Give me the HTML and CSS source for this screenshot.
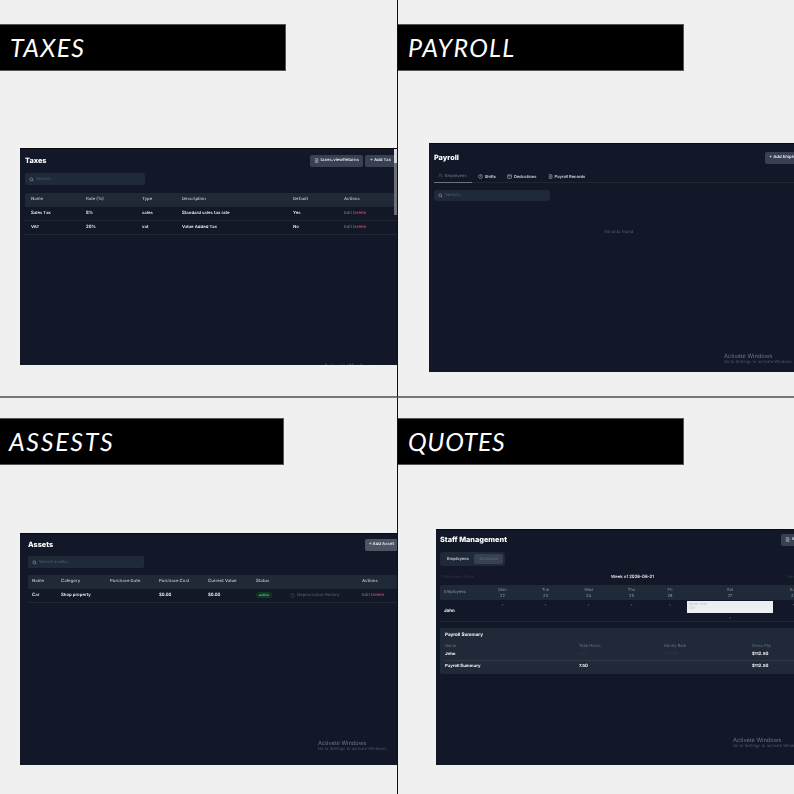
FILE: index.html
```html
<!DOCTYPE html>
<html lang="en">
<head>
<meta charset="utf-8">
<title>Modules</title>
<link rel="stylesheet" href="styles.css">
</head>
<body>
<svg class="defs" width="0" height="0" aria-hidden="true">
  <symbol id="i-search" viewBox="0 0 24 24"><circle cx="11" cy="11" r="7" fill="none" stroke="currentColor" stroke-width="2.5"/><path d="M16 16l5 5" stroke="currentColor" stroke-width="2.5"/></symbol>
  <symbol id="i-doc" viewBox="0 0 24 24"><path d="M6 2h8l5 5v15H6zM14 2v5h5M9 12h7M9 16h7" fill="none" stroke="currentColor" stroke-width="2"/></symbol>
  <symbol id="i-user" viewBox="0 0 24 24"><circle cx="10" cy="8" r="4" fill="none" stroke="currentColor" stroke-width="2"/><path d="M3 21c0-5 3-7 7-7s7 2 7 7M17 4a4 4 0 010 8M19 15c2 1 3 3 3 6" fill="none" stroke="currentColor" stroke-width="2"/></symbol>
  <symbol id="i-clock" viewBox="0 0 24 24"><circle cx="12" cy="12" r="9.5" fill="none" stroke="currentColor" stroke-width="2.2"/><path d="M12 6v6l4 2" fill="none" stroke="currentColor" stroke-width="2.2"/></symbol>
  <symbol id="i-box" viewBox="0 0 24 24"><rect x="3" y="4" width="18" height="17" rx="2" fill="none" stroke="currentColor" stroke-width="2.4"/><path d="M3 9h18" stroke="currentColor" stroke-width="2.4"/></symbol>
</svg>

<main class="sheet">

  <section class="cell cell-taxes">
    <h2 class="banner banner-a">TAXES</h2>
    <div class="screen screen-taxes">
      <div class="page">
        <div class="head">
          <h3 class="title">Taxes</h3>
          <div class="btns">
            <span class="btn"><svg class="ico"><use href="#i-doc"/></svg>taxes.viewReturns</span>
            <span class="btn btn-tax">+ Add Tax</span>
          </div>
        </div>
        <div class="search"><svg class="ico"><use href="#i-search"/></svg>Search...</div>
        <div class="tbl tbl-taxes">
          <div class="row hrow"><span>Name</span><span>Rate (%)</span><span>Type</span><span>Description</span><span>Default</span><span>Actions</span></div>
          <div class="row"><span>Sales Tax</span><span>8%</span><span>sales</span><span>Standard sales tax rate</span><span>Yes</span><span><i class="edit">Edit</i> <b class="del">Delete</b></span></div>
          <div class="row"><span>VAT</span><span>20%</span><span>vat</span><span>Value Added Tax</span><span>No</span><span><i class="edit">Edit</i> <b class="del">Delete</b></span></div>
        </div>
      </div>
      <div class="scrollbit"></div>
      <div class="activate activate-taxes"><strong>Activate Windows</strong><small>Go to Settings to activate Windows.</small></div>
    </div>
  </section>

  <section class="cell cell-payroll">
    <h2 class="banner banner-b">PAYROLL</h2>
    <div class="screen screen-payroll">
      <div class="page">
        <div class="head">
          <h3 class="title">Payroll</h3>
          <div class="btns"><span class="btn">+ Add Employee</span></div>
        </div>
        <nav class="tabs">
          <span class="tab on"><svg class="ico"><use href="#i-user"/></svg>Employees</span>
          <span class="tab"><svg class="ico"><use href="#i-clock"/></svg>Shifts</span>
          <span class="tab"><svg class="ico"><use href="#i-box"/></svg>Deductions</span>
          <span class="tab"><svg class="ico"><use href="#i-doc"/></svg>Payroll Records</span>
        </nav>
        <div class="search"><svg class="ico"><use href="#i-search"/></svg>Search...</div>
        <p class="empty">No data found</p>
      </div>
      <div class="activate activate-payroll"><strong>Activate Windows</strong><small>Go to Settings to activate Windows.</small></div>
    </div>
  </section>

  <section class="cell cell-assets">
    <h2 class="banner banner-c">ASSESTS</h2>
    <div class="screen screen-assets">
      <div class="page">
        <div class="head">
          <h3 class="title">Assets</h3>
          <div class="btns"><span class="btn btn-light">+ Add Asset</span></div>
        </div>
        <div class="search"><svg class="ico"><use href="#i-search"/></svg>Search assets...</div>
        <div class="tbl tbl-assets">
          <div class="row hrow"><span>Name</span><span>Category</span><span>Purchase Date</span><span>Purchase Cost</span><span>Current Value</span><span>Status</span><span></span><span>Actions</span></div>
          <div class="row"><span>Car</span><span>Shop property</span><span></span><span>$0.00</span><span>$0.00</span><span><em class="pill">active</em></span><span class="muted"><svg class="ico"><use href="#i-clock"/></svg>Depreciation History</span><span><i class="edit">Edit</i> <b class="del">Delete</b></span></div>
        </div>
      </div>
      <div class="activate activate-assets"><strong>Activate Windows</strong><small>Go to Settings to activate Windows.</small></div>
    </div>
  </section>

  <section class="cell cell-quotes">
    <h2 class="banner banner-d">QUOTES</h2>
    <div class="screen screen-quotes">
      <div class="page">
        <div class="head">
          <h3 class="title">Staff Management</h3>
          <div class="btns"><span class="btn"><svg class="ico"><use href="#i-doc"/></svg>Export</span></div>
        </div>
        <div class="seg"><span class="seg-i">Employees</span><span class="seg-i seg-on">Schedule</span></div>
        <div class="weekbar"><span class="dim">&lt; Previous Week</span><b>Week of 2026-06-21</b><span class="dim">Next Week &gt;</span></div>
        <div class="sched">
          <div class="srow shead">
            <span class="semp">Employees</span>
            <span>Mon<br>22</span><span>Tue<br>23</span><span>Wed<br>24</span><span>Thu<br>25</span><span>Fri<br>26</span><span>Sat<br>27</span><span>Sun<br>28</span>
          </div>
          <div class="srow sbody">
            <b class="semp">John</b>
            <span>+</span><span>+</span><span>+</span><span>+</span><span>+</span>
            <span class="sat"><span class="shift">09:00-17:00<br>7.50</span>+</span>
            <span>+</span>
          </div>
        </div>
        <div class="summary">
          <h4 class="sumtitle">Payroll Summary</h4>
          <div class="sumrow sumhead"><span>Name</span><span>Total Hours</span><span>Hourly Rate</span><span>Gross Pay</span></div>
          <div class="sumrow sumjohn"><b>John</b><span class="faint">7.50</span><span class="faint">$15.00</span><b>$112.50</b></div>
          <div class="sumrow sumtotal"><b>Payroll Summary</b><b>7.50</b><span></span><b>$112.50</b></div>
        </div>
      </div>
      <div class="activate activate-quotes"><strong>Activate Windows</strong><small>Go to Settings to activate Windows.</small></div>
    </div>
  </section>

</main>
</body>
</html>
```

FILE: styles.css
```css
* { box-sizing: border-box; }
html, body { margin: 0; padding: 0; }
body { width: 794px; height: 794px; overflow: hidden; background: #f0f0f0; font-family: Inter, "Liberation Sans", sans-serif; text-rendering: geometricPrecision; }
.defs { display: block; height: 0; }
h2, h3, h4, p { margin: 0; }

.sheet { display: grid; grid-template-columns: 398px 396px; grid-template-rows: 398px 396px; width: 794px; height: 794px; }
.cell { overflow: hidden; padding-top: 24px; min-width: 0; }
.cell-taxes, .cell-assets { border-right: 1.5px solid #111; }
.cell-taxes, .cell-payroll { border-bottom: 2px solid #777; }
.cell-assets, .cell-quotes { padding-top: 20px; }

.banner { width: 286px; height: 47px; background: #000; border: 1px solid #555; border-left: 0; color: #fff; font: italic 400 25px/46px Lato, "Liberation Sans", sans-serif; letter-spacing: 1.2px; padding-left: 10px; }
.banner-b { letter-spacing: 1.3px; }
.banner-c { width: 284px; padding-left: 9px; letter-spacing: 1.7px; }
.banner-d { letter-spacing: .7px; }

.screen { position: relative; overflow: hidden; background: #131828; border-top: 1px solid #0a0a0a; color: #e5e7eb; filter: blur(.3px); }
.screen-taxes { margin: 77px 0 0 20px; height: 217px; }
.screen-payroll { margin: 72px 0 0 31px; height: 229px; }
.screen-assets { margin: 68px 0 0 20px; height: 232px; }
.screen-quotes { margin: 64px 0 0 38px; height: 236px; }

.page { padding: 5px; width: 385px; }
.screen-payroll .page { padding: 7px 5px; width: 383px; }
.screen-assets .page { padding: 4px 8px; width: 386px; }
.screen-quotes .page { padding: 3px 4px; width: 378px; }

.head { display: flex; justify-content: space-between; align-items: center; height: 13px; }
.title { font-size: 7.3px; font-weight: 800; color: #fff; }
.btns { display: flex; gap: 2px; }
.btn { display: flex; align-items: center; height: 12px; padding: 0 4px; border-radius: 2px; background: #374151; color: #e5e7eb; font-size: 4.3px; font-weight: 600; white-space: nowrap; }
.btn-light { background: #4b5563; }
.btn-tax { padding: 0 9px 0 5px; }
.ico { width: 5px; height: 5px; margin-right: 2px; flex: none; color: currentColor; }

.search { display: flex; align-items: center; width: 120px; height: 12px; margin-top: 6px; padding: 0 4px; border-radius: 2px; background: #1f2937; color: #566070; font-size: 4.2px; }
.search .ico { color: #aab2bf; }
.screen-assets .search { width: 116px; margin-top: 5px; }

.tbl { margin-top: 8px; width: 380px; font-size: 4.3px; font-weight: 600; color: #eceff4; }
.row { display: grid; align-items: center; height: 14px; border-bottom: 1px solid #1f2733; }
.hrow { background: #1f2937; color: #b4bcc8; border-radius: 2px 2px 0 0; }
.tbl-taxes .row { grid-template-columns: 55px 56px 40px 111px 51px 67px; padding-left: 6px; }
.tbl-assets { margin-top: 7px; }
.tbl-assets .row { grid-template-columns: 29px 49px 49px 49px 48px 34px 72px 30px; padding-left: 4px; }
.edit { font-style: normal; color: #5b6472; }
.del { font-weight: 600; color: #b8435a; }
.pill { font-style: normal; font-size: 3.4px; color: #4ade80; background: #123524; border-radius: 5px; padding: 1px 3px; }
.muted { display: flex; align-items: center; color: #4b5563; }

.tabs { display: flex; gap: 6px; height: 13px; margin-top: 6px; border-bottom: 1px solid #1f2733; font-size: 4.1px; font-weight: 600; color: #c9d0da; }
.tab { display: flex; align-items: center; height: 13px; padding: 0 5px 1px 0; }
.tab.on { padding-left: 4px; color: #5b6472; border-bottom: 1px solid #6b7280; }
.screen-payroll .search { width: 116px; margin-top: 7px; height: 11px; }
.empty { width: 370px; text-align: center; margin-top: 29px; font-size: 4.3px; color: #566070; }

.seg { display: flex; width: max-content; margin-top: 6px; padding: 2px; height: 14px; border-radius: 3px; background: #1f2937; font-size: 4.2px; font-weight: 600; color: #c2c9d3; }
.seg-i { display: flex; align-items: center; padding: 0 5px; border-radius: 2px; }
.seg-on { background: #374151; color: #566070; }
.weekbar { display: flex; justify-content: space-between; align-items: center; height: 19px; padding-top: 3px; width: 373px; font-size: 4.3px; }
.weekbar b { color: #e5e7eb; font-weight: 600; margin-left: 4px; }
.dim { color: #2f3745; }
.sched { width: 374px; font-size: 4px; text-align: center; color: #8b93a1; }
.srow { display: grid; grid-template-columns: 41px 43px 43px 43px 43px 34px 86px 41px; }
.semp { text-align: left; padding-left: 4px; }
.shead { background: #1f2937; height: 15px; align-items: center; line-height: 5.5px; border-radius: 2px 2px 0 0; }
.shead .semp { font-size: 4.3px; }
.sbody { height: 22px; padding-top: 1px; line-height: 7px; color: #6b7280; border-bottom: 1px solid #1f2733; }
.sbody .semp { color: #f3f4f6; font-size: 4.4px; align-self: center; font-weight: 700; }
.shift { display: block; background: #eceef1; height: 12px; margin-bottom: 1px; padding: 1px 2px; text-align: left; font-size: 3.2px; line-height: 4px; color: #b4b9c1; }
.summary { margin-top: 6px; width: 374px; height: 46px; padding: 5px 5px 0; border-radius: 2px; background: #1f2937; font-size: 4.3px; color: #f3f4f6; }
.sumtitle { font-size: 4.6px; font-weight: 700; height: 8px; }
.sumrow { display: grid; grid-template-columns: 134px 85px 88px 50px; align-items: center; height: 8px; }
.sumhead { color: #6b7280; font-size: 4px; }
.sumjohn { height: 11px; }
.sumtotal { border-top: 1px solid #2f3a4a; height: 12px; }
.faint { color: #2f3a4a; }

.activate { position: absolute; color: #6f7684; white-space: nowrap; }
.activate strong { display: block; font-weight: 400; font-size: 5.7px; line-height: 7px; }
.activate small { display: block; font-size: 4.15px; line-height: 6px; color: #4f5665; }
.activate-taxes { left: 304px; top: 214px; }
.activate-payroll { left: 295px; top: 209px; }
.activate-assets { left: 298px; top: 206px; }
.activate-quotes { left: 297px; top: 207px; }
.scrollbit { position: absolute; right: 0; top: 0; width: 3px; height: 66px; background: linear-gradient(#d5d7da 0 14px, #6d7078 14px 100%); }
```
